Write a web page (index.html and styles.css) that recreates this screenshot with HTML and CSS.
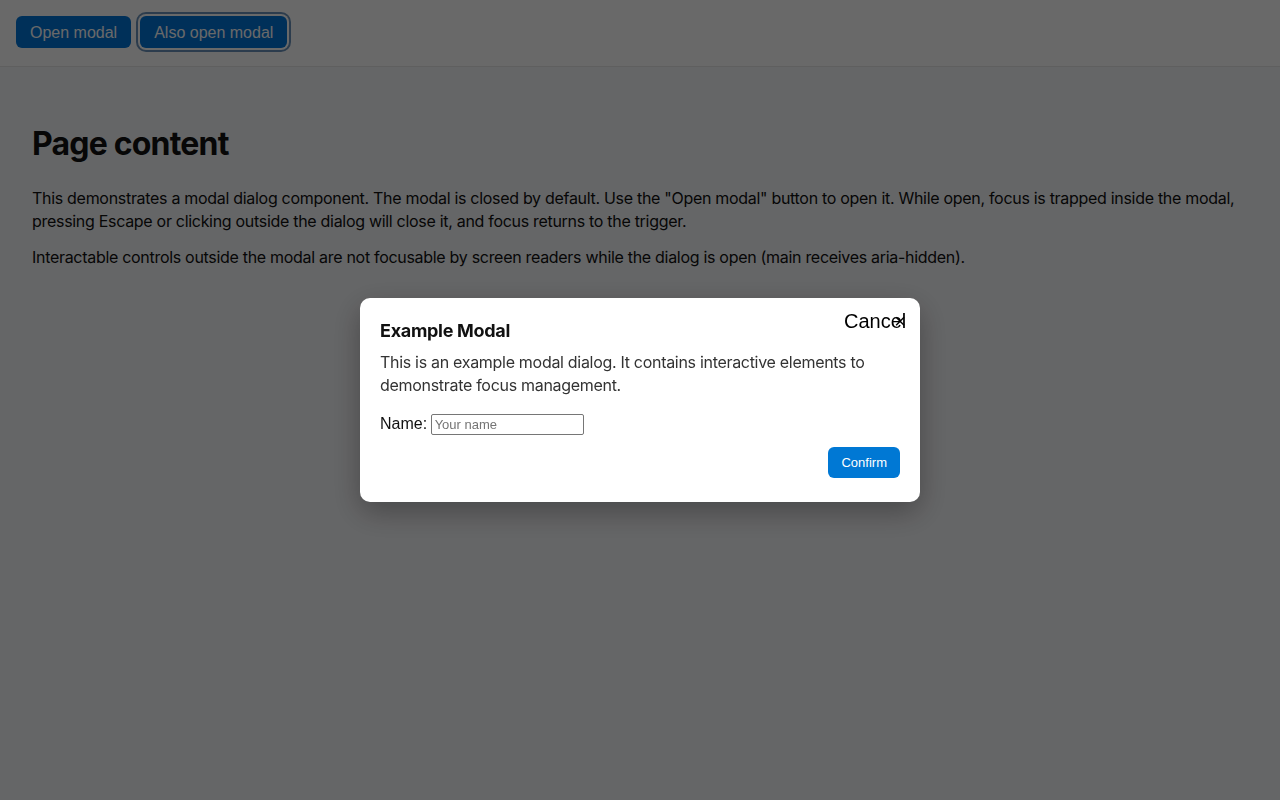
FILE: index.html
```html
<!DOCTYPE html>
<html lang="en">
<head>
    <meta charset="UTF-8">
    <meta name="viewport" content="width=device-width, initial-scale=1.0">
    <title>Modal dialog</title>
    <link rel="stylesheet" href="styles.css">
</head>
<body>
    <header class="topbar">
        <button class="trigger">Open modal</button>
        <button class="trigger focused">Also open modal</button>
    </header>
    <main aria-hidden="true">
        <h1>Page content</h1>
        <p>This demonstrates a modal dialog component. The modal is closed by default. Use the "Open modal" button to open it. While open, focus is trapped inside the modal, pressing Escape or clicking outside the dialog will close it, and focus returns to the trigger.</p>
        <p>Interactable controls outside the modal are not focusable by screen readers while the dialog is open (main receives aria-hidden).</p>
    </main>

    <!-- modal -->
    <div class="overlay">
        <div class="modal" role="dialog" aria-modal="true" aria-labelledby="modal-title">
            <button class="close-btn" aria-label="Close">Cancel<span class="close-x">×</span></button>
            <h2 id="modal-title">Example Modal</h2>
            <p class="modal-text">This is an example modal dialog. It contains interactive elements to demonstrate focus management.</p>
            <div class="field">
                <label for="name">Name:</label>
                <input type="text" id="name" placeholder="Your name">
            </div>
            <div class="actions">
                <button class="confirm">Confirm</button>
            </div>
        </div>
    </div>
</body>
</html>
```

FILE: styles.css
```css
body {
    margin: 0;
    font-family: 'Inter', 'Noto Sans', sans-serif;
    background: #f6f7fa;
    color: #111;
}

.topbar {
    display: flex;
    gap: 9px;
    padding: 16px 16px 18px;
    background: #fff;
    border-bottom: 1px solid #e6e6e6;
}

.trigger {
    height: 32px;
    padding: 1px 14px 0;
    font-family: 'Liberation Sans', Arial, sans-serif;
    font-size: 16px;
    color: #fff;
    background: #0074d9;
    border: none;
    border-radius: 6px;
    cursor: pointer;
}

.trigger.focused {
    box-shadow: 0 0 0 2px #fff, 0 0 0 4px #6b93bb;
}

main {
    padding: 32px;
}

main h1 {
    margin: 26px 0 24px;
    font-size: 32px;
    line-height: 38px;
    letter-spacing: -0.8px;
}

main p {
    margin: 0 0 14px;
    font-size: 16px;
    line-height: 22.5px;
    letter-spacing: -0.3px;
}

.overlay {
    position: fixed;
    inset: 0;
    display: flex;
    align-items: center;
    justify-content: center;
    background: rgba(0, 0, 0, 0.59);
}

.modal {
    position: relative;
    box-sizing: border-box;
    width: 560px;
    padding: 21px 20px 24px;
    background: #fff;
    border-radius: 10px;
    box-shadow: 0 10px 30px rgba(0, 0, 0, 0.3);
}

.close-btn {
    position: absolute;
    top: 12px;
    right: 14px;
    padding: 0;
    font-family: 'Liberation Sans', Arial, sans-serif;
    font-size: 20px;
    color: #000;
    background: none;
    border: none;
    cursor: pointer;
}

.close-x {
    margin-left: -12px;
}

.modal h2 {
    margin: 0 0 8px;
    font-size: 18px;
    line-height: 24px;
    letter-spacing: -0.3px;
}

.modal-text {
    margin: 0 0 16px;
    font-size: 16px;
    line-height: 23px;
    letter-spacing: -0.3px;
    color: #333;
}

.field label {
    font-family: 'Liberation Sans', Arial, sans-serif;
    font-size: 16px;
}

.field input {
    width: 153px;
    box-sizing: border-box;
    height: 21px;
    margin-left: -1px;
    font-family: 'Liberation Sans', Arial, sans-serif;
    font-size: 13px;
    border: 1px solid #767676;
    border-radius: 2px;
    padding: 1px 3px;
}

.actions {
    display: flex;
    justify-content: flex-end;
    margin-top: 12px;
}

.confirm {
    height: 31px;
    padding: 0 13px;
    font-family: 'Liberation Sans', Arial, sans-serif;
    font-size: 13px;
    color: #fff;
    background: #0078d4;
    border: none;
    border-radius: 6px;
    cursor: pointer;
}
```
